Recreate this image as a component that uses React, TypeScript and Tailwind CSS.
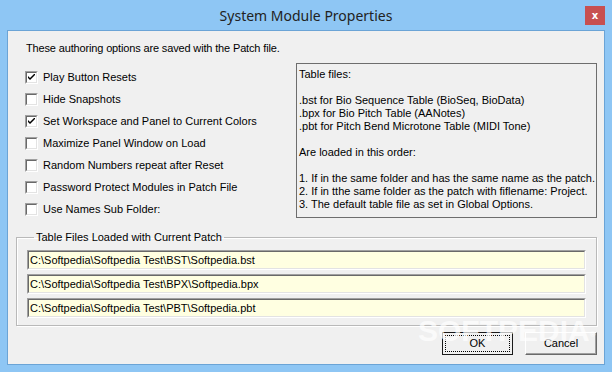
const options = [
  { label: "Play Button Resets", checked: true },
  { label: "Hide Snapshots", checked: false },
  { label: "Set Workspace and Panel to Current Colors", checked: true },
  { label: "Maximize Panel Window on Load", checked: false },
  { label: "Random Numbers repeat after Reset", checked: false },
  { label: "Password Protect Modules in Patch File", checked: false },
  { label: "Use Names Sub Folder:", checked: false },
];

const files = [
  "C:\\Softpedia\\Softpedia Test\\BST\\Softpedia.bst",
  "C:\\Softpedia\\Softpedia Test\\BPX\\Softpedia.bpx",
  "C:\\Softpedia\\Softpedia Test\\PBT\\Softpedia.pbt",
];

const Check = ({ checked }: { checked: boolean }) => (
  <span className="flex h-[13px] w-[13px] border border-[#a0a0a0] border-b-white border-r-white">
    <span className="flex flex-1 items-center justify-center border border-[#696969] border-b-[#e3e3e3] border-r-[#e3e3e3] bg-white">
      {checked && (
        <svg width="7" height="7" viewBox="0 0 7 7">
          <path d="M0 2 L0 4 L2 6 L7 1 L7 -1 L2 4 Z" fill="#000" />
        </svg>
      )}
    </span>
  </span>
);

export default function App() {
  return (
    <div className="flex h-[372px] w-[612px] flex-col bg-[#8ec6f4] px-[7px] font-['Liberation_Sans',Arial,sans-serif] text-[11px] leading-[13px] text-black">
      <div className="grid h-[30px] grid-cols-[1fr_auto_1fr] items-center">
        <div />
        <div className="pt-[1px] font-['Noto_Sans',sans-serif] text-[14px] leading-[20px] text-[#222]">
          System Module Properties
        </div>
        <div className="flex justify-end self-start pt-[6px]">
          <div className="flex h-[19px] w-[20px] items-center justify-center bg-[#c75050] font-['DejaVu_Sans',sans-serif] text-[10px] font-bold text-white">
            x
          </div>
        </div>
      </div>

      <div className="relative flex h-[335px] flex-col border border-[#6ba4d6] bg-[#f0f0f0]">
        <p className="ml-[18px] mt-[11px] tracking-[-0.15px]">These authoring options are saved with the Patch file.</p>

        <div className="mt-[8px] flex">
          <div className="flex w-[288px] flex-col pl-[17px] pt-[3px]">
            {options.map((o) => (
              <div key={o.label} className="flex h-[22px] items-center gap-[5px]">
                <Check checked={o.checked} />
                <span>{o.label}</span>
              </div>
            ))}
          </div>
          <div className="flex h-[155px] w-[301px] flex-col border border-[#6d6d6d] pl-[2px] pt-[4px]">
            <span>Table files:</span>
            <span>&nbsp;</span>
            <span>.bst for Bio Sequence Table (BioSeq, BioData)</span>
            <span>.bpx for Bio Pitch Table (AANotes)</span>
            <span>.pbt for Pitch Bend Microtone Table (MIDI Tone)</span>
            <span>&nbsp;</span>
            <span>Are loaded in this order:</span>
            <span>&nbsp;</span>
            <span>1. If in the same folder and has the same name as the patch.</span>
            <span>2. If in tthe same folder as the patch with fiflename: Project.</span>
            <span>3. The default table file as set in Global Options.</span>
          </div>
        </div>

        <fieldset className="ml-[8px] mt-[11px] w-[581px] border border-[#b9b9b9] px-[10px] pb-[7px] shadow-[inset_1px_1px_0_#fff,1px_1px_0_#fff]">
          <legend className="ml-[7px] px-[2px] leading-[13px]">Table Files Loaded with Current Patch</legend>
          <div className="mt-[6px] flex flex-col gap-[4px]">
            {files.map((f) => (
              <div
                key={f}
                className="flex h-[20px] border border-[#a0a0a0] border-b-white border-r-white"
              >
                <div className="flex flex-1 items-center border border-[#696969] border-b-[#e3e3e3] border-r-[#e3e3e3] bg-[#ffffe1] pl-[1px]">
                  {f}
                </div>
              </div>
            ))}
          </div>
        </fieldset>

        <div className="mt-[6px] flex justify-end gap-[12px] pr-[7px]">
          <button className="flex h-[23px] w-[71px] border border-[#1a1a1a] bg-[#f0f0f0] p-[2px]">
            <span className="flex flex-1 items-center justify-center border border-dotted border-black">OK</span>
          </button>
          <button className="flex h-[23px] w-[72px] items-center justify-center border border-white border-b-[#6a6a6a] border-r-[#6a6a6a] bg-[#f0f0f0] shadow-[inset_-1px_-1px_0_#a0a0a0]">
            Cancel
          </button>
        </div>

        <span className="pointer-events-none absolute left-[410px] top-[285px] font-['Liberation_Sans',sans-serif] text-[30px] font-bold leading-[30px] text-white/70">
          SOFTPEDIA<sup className="text-[8px]">®</sup>
        </span>
      </div>
    </div>
  );
}
